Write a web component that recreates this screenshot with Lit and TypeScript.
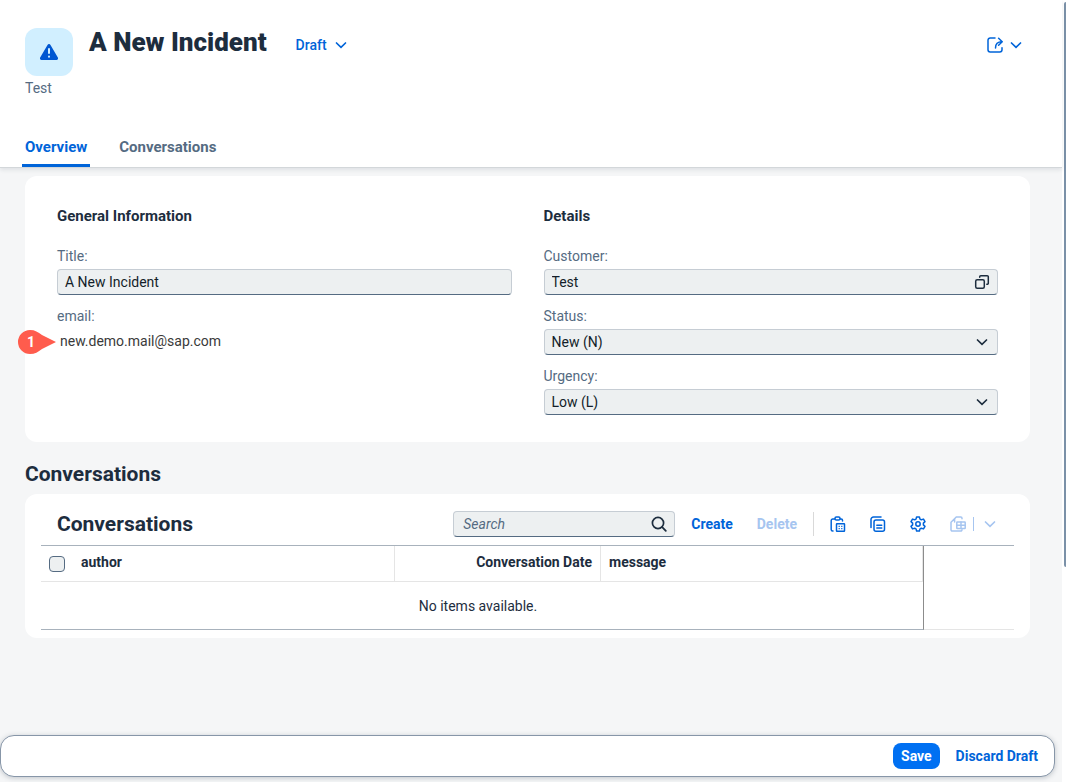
import { LitElement, html, css, svg } from "lit";
import { customElement, property } from "lit/decorators.js";

const glyphs = {
  chevron: svg`<path d="M3.5 6 8 10.4 12.5 6" stroke-width="1.7" />`,
  share: svg`<path d="M8 1H3.200A2.200 2.200 0 0 0 1 3.200v9.600A2.200 2.200 0 0 0 3.200 15h9.600a2.200 2.200 0 0 0 2.200-2.200v-2M8.500 11c0-4 1.500-6.200 6.500-6.200M11.600 1.300 15.200 4.800 11.600 8.300" />`,
  valuehelp: svg`<rect x="1.700" y="5.700" width="8.600" height="8.600" rx="1.500" /><path d="M5.700 3.200V2.800a1.100 1.100 0 0 1 1.100-1.100h6.400a1.100 1.100 0 0 1 1.100 1.100v6.400a1.100 1.100 0 0 1-1.100 1.100h-.400" />`,
  search: svg`<circle cx="7" cy="7" r="5.600" stroke-width="1.700" /><path d="m11.200 11.200 3.600 3.600" stroke-width="1.800" />`,
  paste: svg`<path d="M4.800 3H2.700A1.500 1.500 0 0 0 1.200 4.500v9A1.500 1.500 0 0 0 2.700 15H3M10 3h1.200A1.300 1.300 0 0 1 12.500 4.300V5" /><rect x="5" y="1" width="5" height="3" rx="1.300" /><rect x="6.500" y="7.800" width="8" height="7.400" rx=".5" /><path d="M8.600 10.300h1.200M11.200 10.300h1.200M8.600 12.700h1.200M11.200 12.700h1.200" stroke-width="1.300" stroke-linecap="butt" />`,
  copy: svg`<path d="M1 11.500V3.500A2.500 2.500 0 0 1 3.500 1H11" /><rect x="4" y="4" width="10.500" height="11.200" rx="2" /><path d="M6.800 9.200h5M6.800 12h5" stroke-width="1.400" />`,
  settings: svg`<path d="M6.600 1h2.800l.6 2.100 1.300.7 2.200-.7 1.500 2.500-1.600 1.500v1.800l1.600 1.500-1.500 2.500-2.200-.7-1.300.7-.6 2.100H6.600L6 12.900l-1.300-.7-2.200.7L1 10.400l1.600-1.500V7.100L1 5.600l1.500-2.500 2.200.7L6 3.100z" stroke-linejoin="round" /><circle cx="8" cy="8" r="2.200" />`,
  excel: svg`<path d="M12 2.800V2.200A1.200 1.200 0 0 0 10.800 1H6.300L1 6.300v7.500A1.200 1.200 0 0 0 2.200 15h8.600a1.200 1.200 0 0 0 1.200-1.200M4.600 2.700V6" /><rect x="6.800" y="6" width="8.400" height="6.600" rx=".5" /><path d="M11 6v6.600M6.800 9.300h8.400" />`,
};

@customElement("app-icon")
export class AppIcon extends LitElement {
  @property() name: keyof typeof glyphs = "chevron";

  static styles = css`
    :host {
      display: block;
      width: 16px;
      height: 16px;
      flex: none;
    }
    .glyph {
      display: block;
      fill: none;
      stroke: currentColor;
      stroke-width: 1.5;
      stroke-linecap: round;
    }
  `;

  render() {
    return html`<svg class="glyph" width="16" height="16" viewBox="0 0 16 16" aria-hidden="true">${glyphs[this.name]}</svg>`;
  }
}

@customElement("app-root")
export class AppRoot extends LitElement {
  static styles = css`
    * {
      box-sizing: border-box;
    }
    :host {
      display: flex;
      min-height: 100vh;
      font: 14px/20px Roboto, "Noto Sans", sans-serif;
      color: #1d2d3e;
      background: #fff;
    }
    h1, h2, h3, p {
      margin: 0;
    }
    button {
      font: inherit;
      font-weight: 700;
      color: #0064d9;
      background: none;
      border: 0;
      border-radius: 8px;
      padding: 0;
      height: 26px;
      display: flex;
      align-items: center;
      justify-content: center;
      cursor: pointer;
    }
    button:disabled {
      color: #a6c5f0;
      cursor: default;
    }
    .page {
      flex: 1;
      min-width: 0;
      display: flex;
      flex-direction: column;
      background: #f5f6f7;
    }
    .rail {
      width: 4px;
      padding: 2px 0 0 2px;
    }
    .thumb {
      height: 72.3vh;
      border-radius: 2px 0 0 2px;
      background: #7b91a8;
    }
    .header {
      position: relative;
      background: #fff;
      border-bottom: 1px solid #d3d7da;
      box-shadow: 0 2px 4px rgba(34, 53, 72, 0.1);
      padding: 28px 32px 0 25px;
    }
    .title-row {
      display: flex;
      gap: 16px;
    }
    .avatar {
      width: 48px;
      height: 48px;
      border-radius: 12px;
      background: #d1efff;
      display: grid;
      place-items: center;
    }
    .title {
      font-size: 26px;
      line-height: 28px;
      font-weight: 900;
    }
    .status {
      height: 34px;
      gap: 6px;
      margin-left: 13px;
      font-weight: 500;
    }
    .share {
      height: 34px;
      gap: 5px;
      margin-left: auto;
      padding-right: 6px;
    }
    .subtitle {
      color: #556b82;
      margin-top: 2px;
    }
    .tabs {
      display: flex;
      gap: 26px;
      margin: 29px 0 0 -3px;
    }
    .tab {
      padding: 10px 3px 7px;
      border-bottom: 3px solid transparent;
      color: #556b82;
      font-size: 15px;
      font-weight: 700;
      text-decoration: none;
    }
    .tab.active {
      color: #0064d9;
      border-color: #0064d9;
    }
    .content {
      flex: 1;
      padding: 8px 32px 40px 25px;
    }
    .card {
      background: #fff;
      border-radius: 12px;
    }
    .form {
      display: grid;
      grid-template-columns: 1fr 1fr;
      gap: 32px;
      padding: 30px 32px 27px;
    }
    .group {
      display: flex;
      flex-direction: column;
      gap: 11px;
    }
    .group-title {
      font-size: 15px;
      line-height: 20px;
      margin-bottom: 9px;
    }
    .field {
      display: grid;
      gap: 3px;
    }
    .label {
      color: #556b82;
    }
    .box {
      display: grid;
      grid-template-columns: 1fr 32px;
      align-items: center;
    }
    .box > * {
      grid-row: 1;
    }
    .input {
      grid-column: 1 / -1;
      width: 100%;
      min-width: 0;
      height: 26px;
      padding: 0 32px 0 7px;
      font: inherit;
      color: #131e29;
      background: #edf0f1;
      border: 1px solid #c6cdd4;
      border-bottom-color: #556b82;
      border-radius: 4px;
      appearance: none;
    }
    .input::placeholder {
      color: #556b82;
      font-style: italic;
      opacity: 1;
    }
    .addon {
      grid-column: 2;
      justify-self: center;
      color: #1d2d3e;
      pointer-events: none;
    }
    .value {
      position: relative;
      color: #3a3a3a;
      padding: 2px 3px;
    }
    .marker {
      position: absolute;
      left: -39px;
      top: 1px;
      width: 38px;
      height: 24px;
    }
    .marker-shape {
      display: block;
      fill: #ff5c4d;
    }
    .marker-text {
      position: absolute;
      inset: 0 auto 0 0;
      width: 26px;
      line-height: 24px;
      font-size: 14px;
      font-weight: 700;
      text-align: center;
      color: #fff;
    }
    .section-title {
      font-size: 21px;
      line-height: 24px;
      margin: 20px 0 8px;
    }
    .list {
      padding: 0 16px 8px;
    }
    .toolbar {
      display: flex;
      align-items: center;
      padding: 17px 16px 8px;
      border-bottom: 1px solid #a8b2bc;
    }
    .toolbar-title {
      font-size: 21px;
      line-height: 24px;
      margin-right: auto;
    }
    .search {
      width: 222px;
      margin-right: 8px;
    }
    .search .input {
      padding-left: 9px;
    }
    .action {
      padding: 0 8px;
      margin-right: 8px;
    }
    .divider {
      width: 1px;
      height: 24px;
      background: #d9d9d9;
      margin-right: 4px;
    }
    .tool {
      width: 40px;
    }
    .split {
      display: flex;
      align-items: center;
    }
    .split-line {
      width: 1px;
      height: 14px;
      background: #a6c5f0;
      margin-left: -5px;
      margin-right: 8px;
    }
    .grid {
      display: flex;
    }
    .table {
      flex: 1;
      width: 100%;
      min-width: 0;
      table-layout: fixed;
      border-collapse: separate;
      border-spacing: 0;
      border-right: 1px solid #8c8c8c;
      border-bottom: 1px solid #a8b2bc;
    }
    .filler {
      width: 90px;
      border-bottom: 1px solid #e5e5e5;
    }
    .th {
      height: 36px;
      padding: 0 8px 3px;
      text-align: left;
      font-weight: 700;
      border-right: 1px solid #e5e5e5;
      border-bottom: 1px solid #e5e5e5;
    }
    .th.select {
      padding: 0 8px;
      border-right: 0;
    }
    .th.end {
      text-align: right;
    }
    .col-select {
      width: 32px;
    }
    .col-date {
      width: 206px;
    }
    .check {
      display: block;
      appearance: none;
      width: 16px;
      height: 16px;
      margin: 0;
      border: 1px solid #556b82;
      border-radius: 4px;
      background: #edf0f1;
    }
    .empty {
      height: 47px;
      padding: 0 8px 0 0;
      text-align: center;
    }
    .footer {
      position: sticky;
      bottom: 5px;
      display: flex;
      justify-content: flex-end;
      align-items: center;
      gap: 8px;
      height: 42px;
      margin: 0 7px 5px 0;
      padding: 0 8px;
      border: 1px solid #8796a8;
      border-radius: 14px;
      background: #fff;
      box-shadow: 0 1px 5px rgba(34, 53, 72, 0.25);
    }
    .footer-action {
      padding: 0 8px;
    }
    .primary {
      color: #fff;
      background: #0070f2;
    }
  `;

  private renderSelect(id: string, label: string, value: string) {
    return html`<div class="field">
      <label class="label" for=${id}>${label}</label>
      <div class="box">
        <select class="input" id=${id}><option>${value}</option></select>
        <app-icon class="addon" name="chevron"></app-icon>
      </div>
    </div>`;
  }

  render() {
    return html`
      <div class="page">
        <header class="header">
          <div class="title-row">
            <div class="avatar">
              <svg width="18" height="16" viewBox="0 0 18 16" aria-hidden="true">
                <path fill="#0057d2" d="M7.500 1a1.700 1.700 0 0 1 3 0l7.200 12.300A1.700 1.700 0 0 1 16.200 16H1.800A1.700 1.700 0 0 1 .3 13.300z" />
                <path stroke="#d1efff" stroke-width="2" stroke-linecap="round" d="M9 5v4M9 12.600v.1" />
              </svg>
            </div>
            <h1 class="title">A New Incident</h1>
            <button class="status">Draft <app-icon name="chevron"></app-icon></button>
            <button class="share" aria-label="Share">
              <app-icon name="share"></app-icon><app-icon name="chevron"></app-icon>
            </button>
          </div>
          <p class="subtitle">Test</p>
          <nav class="tabs">
            <a class="tab active" href="#overview">Overview</a>
            <a class="tab" href="#conversations">Conversations</a>
          </nav>
        </header>

        <main class="content">
          <section class="card form" id="overview">
            <div class="group">
              <h3 class="group-title">General Information</h3>
              <div class="field">
                <label class="label" for="title">Title:</label>
                <input class="input" id="title" .value=${"A New Incident"} />
              </div>
              <div class="field">
                <span class="label">email:</span>
                <div class="value">
                  new.demo.mail@sap.com
                  <span class="marker">
                    <svg class="marker-shape" width="38" height="24" viewBox="0 0 38 24" aria-hidden="true">
                      <path d="M12 0C17 0 20 2 24 5l14 7-14 7c-4 3-7 5-12 5a12 12 0 0 1 0-24z" />
                    </svg>
                    <span class="marker-text">1</span>
                  </span>
                </div>
              </div>
            </div>
            <div class="group">
              <h3 class="group-title">Details</h3>
              <div class="field">
                <label class="label" for="customer">Customer:</label>
                <div class="box">
                  <input class="input" id="customer" .value=${"Test"} />
                  <app-icon class="addon" name="valuehelp"></app-icon>
                </div>
              </div>
              ${this.renderSelect("status", "Status:", "New (N)")}
              ${this.renderSelect("urgency", "Urgency:", "Low (L)")}
            </div>
          </section>

          <h2 class="section-title" id="conversations">Conversations</h2>
          <section class="card list">
            <div class="toolbar">
              <h3 class="toolbar-title">Conversations</h3>
              <div class="box search">
                <input class="input" type="text" placeholder="Search" aria-label="Search" />
                <app-icon class="addon" name="search"></app-icon>
              </div>
              <button class="action">Create</button>
              <button class="action" disabled>Delete</button>
              <span class="divider"></span>
              <button class="tool" aria-label="Paste"><app-icon name="paste"></app-icon></button>
              <button class="tool" aria-label="Copy"><app-icon name="copy"></app-icon></button>
              <button class="tool" aria-label="Settings"><app-icon name="settings"></app-icon></button>
              <div class="split">
                <button class="tool" disabled aria-label="Export"><app-icon name="excel"></app-icon></button>
                <span class="split-line"></span>
                <button disabled aria-label="Export options"><app-icon name="chevron"></app-icon></button>
              </div>
            </div>
            <div class="grid">
              <table class="table">
                <colgroup>
                  <col class="col-select" />
                  <col />
                  <col class="col-date" />
                  <col />
                </colgroup>
                <thead>
                  <tr>
                    <th class="th select"><input class="check" type="checkbox" aria-label="Select all" /></th>
                    <th class="th">author</th>
                    <th class="th end">Conversation Date</th>
                    <th class="th">message</th>
                  </tr>
                </thead>
                <tbody>
                  <tr><td class="empty" colspan="4">No items available.</td></tr>
                </tbody>
              </table>
              <div class="filler"></div>
            </div>
          </section>
        </main>

        <footer class="footer">
          <button class="footer-action primary">Save</button>
          <button class="footer-action">Discard Draft</button>
        </footer>
      </div>
      <div class="rail"><div class="thumb"></div></div>
    `;
  }
}
